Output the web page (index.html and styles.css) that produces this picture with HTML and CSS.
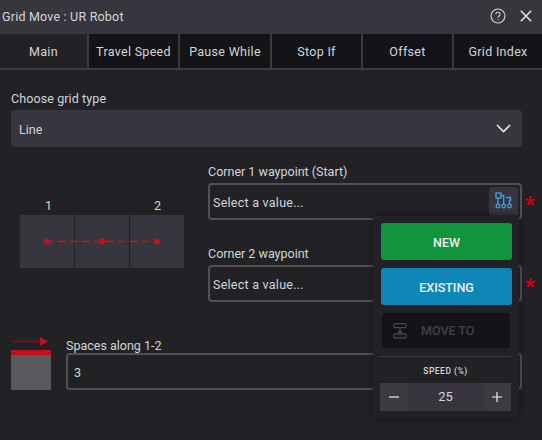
FILE: index.html
```html
<!DOCTYPE html>
<html lang="en">
<head>
  <meta charset="UTF-8">
  <title>Grid Move : UR Robot</title>
  <link rel="stylesheet" href="styles.css">
</head>
<body>
  <div class="dialog">
    <div class="titlebar">
      <span class="title">Grid Move : UR Robot</span>
      <svg class="help" width="16" height="16" viewBox="0 0 16 16" fill="none" stroke="#d8d8da" stroke-width="1.1">
        <circle cx="8" cy="8" r="7"/>
        <path d="M5.9 6.2a2.1 2.1 0 1 1 3.2 1.8c-.7.4-1.1.9-1.1 1.7"/>
        <path d="M8 11.2v1.1"/>
      </svg>
      <svg class="close" width="12" height="12" viewBox="0 0 12 12" fill="none" stroke="#e4e4e6" stroke-width="1.5">
        <path d="M.8.8l10.4 10.4M11.2.8L.8 11.200"/>
      </svg>
    </div>

    <div class="tabs">
      <div class="tab active">Main</div>
      <div class="tab">Travel Speed</div>
      <div class="tab">Pause While</div>
      <div class="tab">Stop If</div>
      <div class="tab">Offset</div>
      <div class="tab">Grid Index</div>
    </div>

    <div class="content">
      <label class="label grid-type">Choose grid type</label>
      <div class="select">
        <span>Line</span>
        <svg width="15" height="9" viewBox="0 0 15 9" fill="none" stroke="#e4e4e6" stroke-width="1.6">
          <path d="M1 1l6.5 6.500L14 1"/>
        </svg>
      </div>

      <div class="corners">
        <div class="diagram">
          <div class="diagram-nums"><span>1</span><span>2</span></div>
          <div class="cells">
            <div class="cell"></div>
            <div class="cell"></div>
            <div class="cell"></div>
            <svg class="path-line" width="164" height="53" viewBox="0 0 164 53" fill="#c4101c">
              <path d="M26 26.500H137" stroke="#d01020" stroke-width="1.500" stroke-dasharray="7 5" fill="none"/>
              <circle cx="27" cy="26.500" r="3"/>
              <circle cx="82" cy="26.500" r="3"/>
              <circle cx="137" cy="26.500" r="3"/>
            </svg>
          </div>
        </div>

        <div class="corner-fields">
          <div class="field">
            <label class="label">Corner 1 waypoint (Start)</label>
            <div class="input-row">
              <div class="input">
                <span>Select a value...</span>
                <div class="pick">
                  <svg width="18" height="17" viewBox="0 0 18 17" fill="none" stroke="#3ea4e6" stroke-width="1.300">
                    <rect x="1" y="1" width="5" height="5"/>
                    <path d="M3 6v6"/>
                    <circle cx="3" cy="14" r="1.800"/>
                    <path d="M6 3.500h2.700v8.500"/>
                    <circle cx="8.700" cy="14" r="1.800"/>
                    <path d="M11 5.500h4.500v3h-1v3.500"/>
                    <circle cx="14.500" cy="14" r="1.800"/>
                  </svg>
                </div>
              </div>
              <span class="req">*</span>
            </div>
          </div>

          <div class="field">
            <label class="label">Corner 2 waypoint</label>
            <div class="input-row">
              <div class="input">
                <span>Select a value...</span>
              </div>
              <span class="req">*</span>
            </div>
          </div>
        </div>
      </div>

      <div class="spaces">
        <div class="spaces-icon">
          <svg width="40" height="16" viewBox="0 0 40 16" fill="none">
            <path d="M2 7.500H30" stroke="#6e1119" stroke-width="2"/>
            <path d="M29 3l8 4.500-8 4.500z" fill="#c4101c"/>
          </svg>
          <div class="spaces-box"></div>
        </div>
        <div class="spaces-field">
          <label class="label">Spaces along 1-2</label>
          <div class="input"><span>3</span></div>
        </div>
      </div>
    </div>

    <div class="menu">
      <button class="btn new">NEW</button>
      <button class="btn existing">EXISTING</button>
      <div class="btn moveto">
        <svg width="14" height="16" viewBox="0 0 14 16" fill="none" stroke="#47474b" stroke-width="1.300">
          <rect x=".7" y=".7" width="12.600" height="4" rx="1.500"/>
          <rect x=".7" y="11" width="12.600" height="4" rx="1.500"/>
          <path d="M7 4.700v5.500M5 8.200l2 2 2-2"/>
        </svg>
        <span>MOVE TO</span>
      </div>
      <div class="menu-line"></div>
      <div class="speed-label">SPEED (%)</div>
      <div class="stepper">
        <span class="step">
          <svg width="10" height="10" viewBox="0 0 10 10" stroke="#f0f0f0" stroke-width="1.200"><path d="M0 5h10"/></svg>
        </span>
        <span class="step-val">25</span>
        <span class="step">
          <svg width="10" height="10" viewBox="0 0 10 10" stroke="#f0f0f0" stroke-width="1.200"><path d="M0 5h10M5 0v10"/></svg>
        </span>
      </div>
    </div>
  </div>
</body>
</html>
```

FILE: styles.css
```css
/* Grid move dialog */
* { box-sizing: border-box; }
html, body { margin: 0; padding: 0; }
body { width: 542px; height: 440px; overflow: hidden; background: #222226; color: #d4d4d8; font-family: Roboto, "Liberation Sans", sans-serif; font-size: 12.5px; }

.dialog { position: relative; width: 542px; height: 440px; }

.titlebar { display: flex; align-items: center; height: 34px; padding: 0 10px 2px 2px; background: #37363e; }
.title { flex: 1; letter-spacing: .2px; }
.help { margin-right: 14px; margin-top: -1px; }
.close { margin-top: -1px; }

.tabs { display: flex; height: 36px; background: #3a3a40; padding-bottom: 2px; }
.tab { flex: 0 0 89px; display: flex; align-items: center; justify-content: center; background: #131318; margin-left: 2px; letter-spacing: .3px; }
.tab:first-child { flex-basis: 87px; margin-left: 0; }
.tab:nth-child(3) { flex-basis: 90px; }
.tab:last-child { flex: 1; }
.tab.active { background: #222226; }

.content { padding: 20px 20px 0 11px; }
.label { display: block; height: 16px; line-height: 17px; }
.grid-type { letter-spacing: .1px; }

.select { display: flex; align-items: center; justify-content: space-between; height: 37px; margin-top: 4px; padding: 0 11px 0 8px; background: #37363e; border-radius: 4px; }
.select span { padding-top: 2px; }

.corners { display: flex; margin-top: 16px; }
.diagram { flex: none; width: 197px; padding: 35px 0 0 9px; }
.diagram-nums { display: flex; justify-content: space-between; width: 164px; height: 16px; padding: 0 23px 0 25px; line-height: 16px; }
.cells { position: relative; display: flex; gap: 1px; width: 164px; height: 53px; margin-top: 1px; }
.cell { flex: 1; background: #37363e; }
.path-line { position: absolute; left: 0; top: 0; }

.corner-fields { flex: none; width: 314px; }
.field { margin-bottom: 25px; }
.field:last-child { margin-bottom: 0; }
.input-row { display: flex; align-items: center; margin-top: 4px; }
.input { display: flex; align-items: center; justify-content: space-between; flex: 1; height: 37px; padding: 0 4px 0 3px; border: 2px solid #515156; border-radius: 4px; letter-spacing: .25px; }
.input span { padding-top: 2px; }
.input-row .input { flex: none; width: 314px; }
.req { flex: none; width: 0; margin-left: 3px; padding-top: 6px; color: #d0000f; font-size: 22px; font-weight: 700; line-height: 14px; }
.pick { display: flex; align-items: center; justify-content: center; width: 29px; height: 29px; margin-right: -2px; background: #37363e; border-radius: 3px; }
.pick svg { margin-top: -2px; }

.spaces { display: flex; margin-top: 32px; }
.spaces-icon { width: 55px; }
.spaces-icon svg { display: block; }
.spaces-box { width: 40px; height: 40px; background: #59595d; border-top: 5px solid #c4101c; }
.spaces-field { flex: 1; margin-top: 3px; }
.spaces-field .input { padding-left: 6px; }

.menu { position: absolute; left: 373px; top: 215px; width: 146px; height: 203px; padding: 8px 0 0 7px; background: #222226; border-radius: 4px; box-shadow: 0 0 6px rgba(0,0,0,.45); }
.btn { display: flex; align-items: center; justify-content: center; width: 131px; height: 37px; margin-left: 1px; padding: 2px 0 0; border: none; border-radius: 3px; color: #f0f0f0; font-family: inherit; font-size: 12.5px; font-weight: 500; }
.new { background: #11953c; }
.existing { background: #0f86b8; margin-top: 8px; }
.moveto { justify-content: flex-start; width: 128px; height: 35px; margin: 8px 0 0 2px; padding: 0 0 0 11px; background: #131318; color: #414145; }
.moveto svg { margin-right: 14px; }
.menu-line { width: 131px; height: 1px; margin-top: 8px; background: #3a3a40; }
.speed-label { width: 131px; margin-top: 8px; text-align: center; font-size: 8.5px; font-weight: 500; letter-spacing: .5px; line-height: 12px; }
.stepper { display: flex; align-items: center; width: 131px; height: 28px; margin-top: 6px; background: #3a3a40; }
.step { display: flex; align-items: center; justify-content: center; width: 28px; }
.step-val { flex: 1; text-align: center; font-size: 13px; line-height: 28px; background: #37363e; }
```
